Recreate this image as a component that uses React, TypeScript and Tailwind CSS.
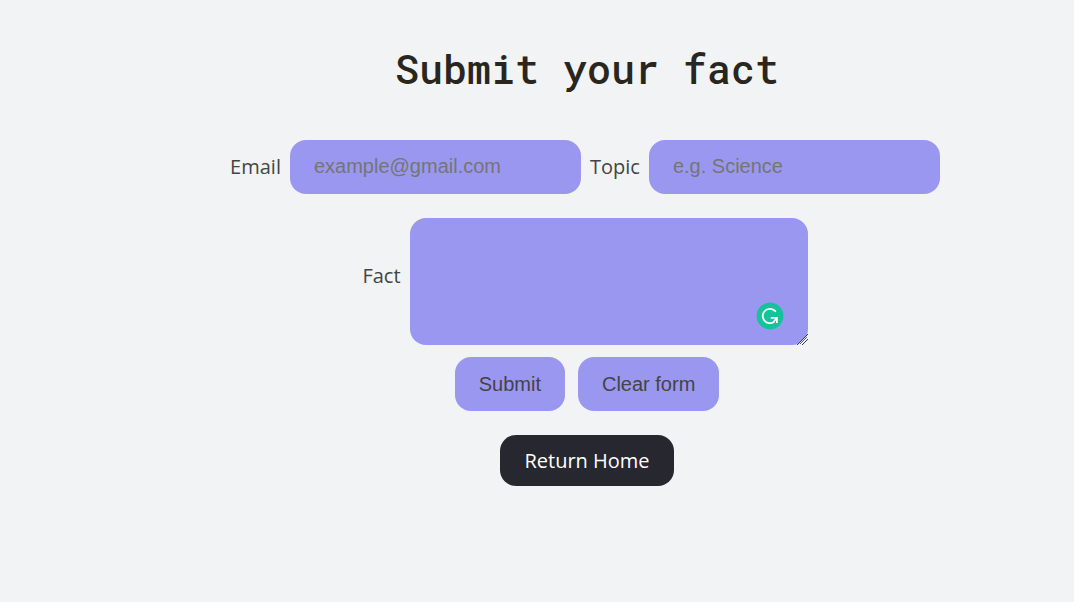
import React from "react";

const fieldClass =
  "rounded-2xl bg-[#9a97f1] px-6 font-['Liberation_Sans',Arial,sans-serif] text-xl text-[#444444] placeholder:text-[#757575] placeholder:opacity-100";

const labelClass = "text-xl text-[#444444]";

function AssistantBadge() {
  return (
    <svg
      className="pointer-events-none absolute right-6 bottom-[15px] size-7"
      viewBox="0 0 28 28"
      fill="none"
      aria-hidden="true"
    >
      <circle cx="14" cy="14" r="13.4" fill="#15c39a" />
      <path
        d="M19.3 9.2A7.2 7.2 0 1 0 17.6 20.2"
        stroke="#fff"
        strokeWidth="1.8"
        strokeLinecap="round"
      />
      <path d="M14.8 15.9h6.1v5.2" stroke="#fff" strokeWidth="1.7" />
      <path d="M17.2 20.2 20.6 16.2" stroke="#fff" strokeWidth="1.7" />
    </svg>
  );
}

function ResizeGrip() {
  return (
    <svg
      className="pointer-events-none absolute right-0 bottom-0 size-3"
      viewBox="0 0 12 12"
      fill="none"
      strokeWidth="1"
      aria-hidden="true"
    >
      <path d="M2 12 12 2M7 12l5-5" stroke="#e4e4f4" />
      <path d="M1 12 12 1M6 12l6-6" stroke="#3c3b55" />
    </svg>
  );
}

export default function App() {
  return (
    <main className="min-h-screen bg-[#f1f3f5] pt-10 pb-10 pl-[100px] font-['Open_Sans',sans-serif]">
      <h1 className="text-center font-['Roboto_Mono','DejaVu_Sans_Mono',monospace] text-[40px] leading-[58px] font-medium text-[#29261f]">
        Submit your fact
      </h1>

      <form className="mt-[42px] flex flex-col items-center">
        <div className="flex flex-wrap items-center justify-center gap-[9px] pr-1">
          <label htmlFor="email" className={labelClass}>
            Email
          </label>
          <input
            id="email"
            type="email"
            placeholder="example@gmail.com"
            className={`${fieldClass} h-[54px] w-[291px] pb-0.5`}
          />
          <label htmlFor="topic" className={labelClass}>
            Topic
          </label>
          <input
            id="topic"
            type="text"
            placeholder="e.g. Science"
            className={`${fieldClass} h-[54px] w-[291px] pb-0.5`}
          />
        </div>

        <div className="mt-6 flex items-center gap-[9px] pr-1">
          <label htmlFor="fact" className={`${labelClass} pb-3`}>
            Fact
          </label>
          <div className="relative flex">
            <textarea
              id="fact"
              className={`${fieldClass} h-[127px] w-[398px] resize py-3`}
            />
            <AssistantBadge />
            <ResizeGrip />
          </div>
        </div>

        <div className="mt-3 flex gap-[13px]">
          <button type="submit" className={`${fieldClass} h-[54px]`}>
            Submit
          </button>
          <button type="reset" className={`${fieldClass} h-[54px]`}>
            Clear form
          </button>
        </div>
      </form>

      <div className="mt-6 flex justify-center">
        <a
          href="#"
          className="rounded-2xl bg-[#27272f] px-6 py-3 text-xl leading-[27px] text-white"
        >
          Return Home
        </a>
      </div>
    </main>
  );
}
